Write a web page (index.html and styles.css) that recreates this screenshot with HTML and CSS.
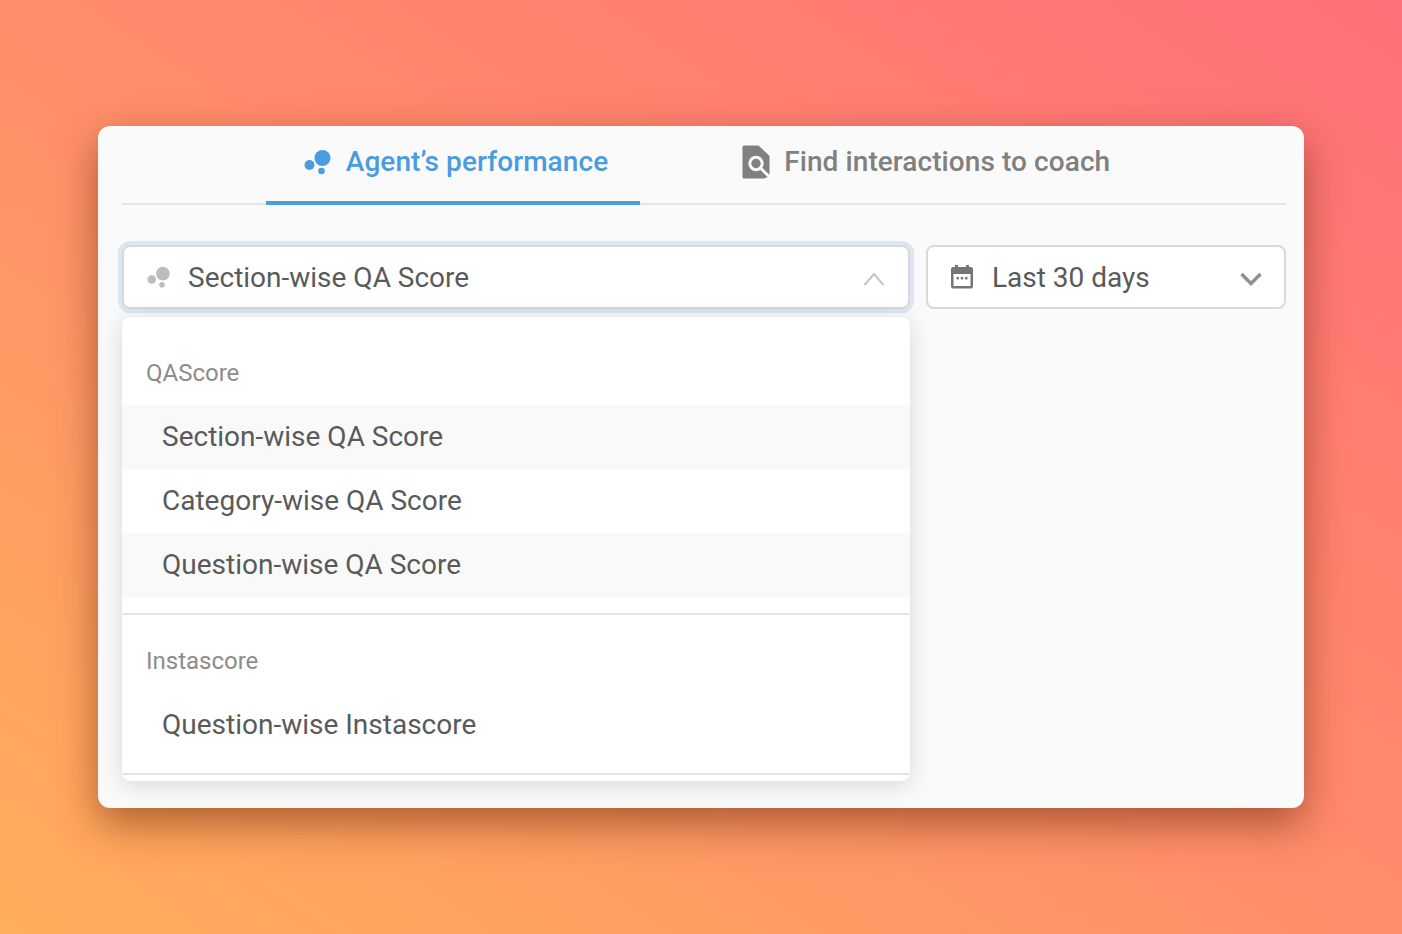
FILE: index.html
```html
<!DOCTYPE html>
<html lang="en">
<head>
    <meta charset="UTF-8">
    <meta name="viewport" content="width=device-width, initial-scale=1.0">
    <title>Agent's performance</title>
    <link rel="stylesheet" href="styles.css">
</head>
<body>
    <div class="card">
        <div class="tabs">
            <div class="tab tab-active">
                <svg class="tab-icon" width="28" height="28" viewBox="0 0 28 28">
                    <circle cx="18.5" cy="10" r="8" fill="#4a9be0"/>
                    <circle cx="5.5" cy="17" r="5" fill="#4a9be0"/>
                    <circle cx="17.5" cy="23" r="3.3" fill="#4a9be0"/>
                </svg>
                <span>Agent’s performance</span>
            </div>
            <div class="tab">
                <svg class="tab-icon" width="28" height="34" viewBox="0 0 28 34">
                    <path d="M2 0.5H16.5L27.5 11V29L26 32L22 33.5H2Q0.5 33.5 0.5 32V2Q0.5 0.5 2 0.5Z" fill="#808080"/>
                    <circle cx="14" cy="18.5" r="6.2" fill="none" stroke="#fafafa" stroke-width="3"/>
                    <path d="M18.5 23L26.5 31" stroke="#fafafa" stroke-width="3"/>
                </svg>
                <span>Find interactions to coach</span>
            </div>
        </div>

        <div class="filters">
            <div class="select-col">
                <div class="select select-open">
                    <svg class="select-icon" width="24" height="24" viewBox="0 0 28 28">
                        <circle cx="18.5" cy="10" r="8" fill="#bdbdbd"/>
                        <circle cx="5.5" cy="17" r="5" fill="#bdbdbd"/>
                        <circle cx="17.5" cy="23" r="3.3" fill="#bdbdbd"/>
                    </svg>
                    <span class="select-label">Section-wise QA Score</span>
                    <svg class="chevron" width="22" height="14" viewBox="0 0 22 14">
                        <path d="M1.5 13L11 2L20.5 13" fill="none" stroke="#c4c4c4" stroke-width="2"/>
                    </svg>
                </div>

                <div class="menu">
                    <div class="group">
                        <div class="group-title">QAScore</div>
                        <div class="item item-shaded">Section-wise QA Score</div>
                        <div class="item">Category-wise QA Score</div>
                        <div class="item item-shaded">Question-wise QA Score</div>
                    </div>
                    <div class="group group-next">
                        <div class="group-title">Instascore</div>
                        <div class="item">Question-wise Instascore</div>
                    </div>
                </div>
            </div>

            <div class="select select-date">
                <svg class="date-icon" width="24" height="26" viewBox="0 0 24 26">
                    <path d="M3 3H21Q23 3 23 5V22Q23 24.5 21 24.5H3Q1 24.5 1 22V5Q1 3 3 3ZM3.5 10V22H20.5V10Z" fill="#757575" fill-rule="evenodd"/>
                    <rect x="5" y="1" width="3" height="5" fill="#757575"/>
                    <rect x="16" y="1" width="3" height="5" fill="#757575"/>
                    <rect x="6.5" y="13" width="2.4" height="2.4" fill="#757575"/>
                    <rect x="10.8" y="13" width="2.4" height="2.4" fill="#757575"/>
                    <rect x="15.1" y="13" width="2.4" height="2.4" fill="#757575"/>
                </svg>
                <span class="select-label">Last 30 days</span>
                <svg class="chevron" width="22" height="14" viewBox="0 0 22 14">
                    <path d="M1.5 2L11 11.5L20.5 2" fill="none" stroke="#8f8f8f" stroke-width="3.4"/>
                </svg>
            </div>
        </div>
    </div>
</body>
</html>
```

FILE: styles.css
```css
* {
    box-sizing: border-box;
}
body {
    margin: 0;
    height: 934px;
    overflow: hidden;
    padding: 126px 98px 0;
    font-family: Roboto, Arial, sans-serif;
    background: linear-gradient(to top right, #ffae5b 0%, #ff8d6a 50%, #ff6f78 100%);
}
.card {
    width: 1206px;
    height: 682px;
    padding: 0 18px 0 24px;
    background-color: #fafafa;
    border-radius: 12px;
    box-shadow: 0 16px 40px rgba(90, 30, 0, 0.5);
}
.tabs {
    display: flex;
    justify-content: center;
    gap: 64px;
    height: 79px;
    border-bottom: 2px solid #e6e6e6;
}
.tab {
    display: flex;
    align-items: center;
    gap: 14px;
    height: 79px;
    padding: 0 32px 8px 38px;
    font-size: 28px;
    font-weight: 500;
    letter-spacing: 0.08px;
    color: #808080;
}
.tab-active {
    color: #4a9be0;
    border-bottom: 4px solid #4a9be0;
    padding-bottom: 4px;
}
.filters {
    display: flex;
    gap: 16px;
    padding-top: 40px;
}
.select-col {
    width: 788px;
}
.select {
    display: flex;
    align-items: center;
    height: 64px;
    padding: 0 22px;
    background-color: #fff;
    border: 2px solid #d9d9d9;
    border-radius: 8px;
    font-size: 28px;
    color: #5a5a5a;
}
.select-open {
    padding-right: 23px;
    box-shadow: 0 0 0 4px #dae6f3;
}
.select-icon {
    margin-left: 1px;
    margin-right: 17px;
}
.select-label {
    flex: 1;
}
.select-date {
    width: 360px;
}
.date-icon {
    margin-right: 18px;
}
.chevron {
    margin-top: 3px;
}
.menu {
    margin-top: 8px;
    height: 464px;
    padding-top: 24px;
    background-color: #fff;
    border-radius: 8px;
    box-shadow: 0 4px 24px rgba(0, 0, 0, 0.14);
    overflow: hidden;
}
.group {
    padding-bottom: 16px;
    border-bottom: 2px solid #e3e3e3;
}
.group-next {
    padding-top: 14px;
}
.group-title {
    height: 64px;
    padding: 16px 24px 0;
    line-height: 32px;
    font-size: 24px;
    color: #8c8c8c;
}
.item {
    height: 64px;
    padding-left: 40px;
    line-height: 64px;
    font-size: 28px;
    color: #5a5a5a;
}
.item-shaded {
    background-color: #f9f9f9;
}
```
